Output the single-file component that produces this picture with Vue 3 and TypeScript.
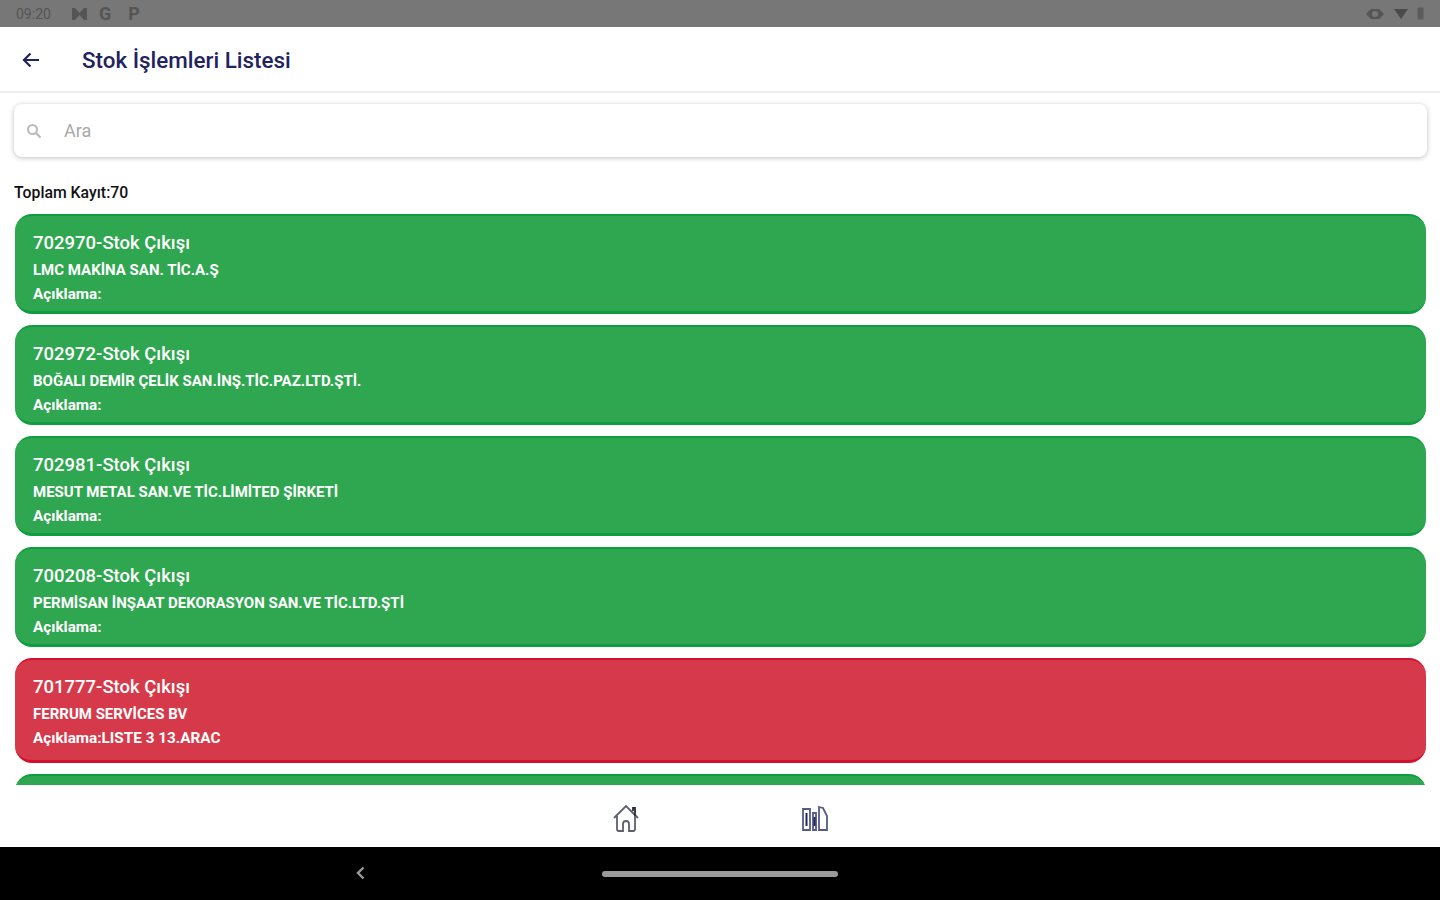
<script setup lang="ts">
interface StockRow {
  id: number
  company: string
  note: string
  failed?: boolean
}

const rows: StockRow[] = [
  { id: 702970, company: 'LMC MAKİNA SAN. TİC.A.Ş', note: '' },
  { id: 702972, company: 'BOĞALI DEMİR ÇELİK SAN.İNŞ.TİC.PAZ.LTD.ŞTİ.', note: '' },
  { id: 702981, company: 'MESUT METAL SAN.VE TİC.LİMİTED ŞİRKETİ', note: '' },
  { id: 700208, company: 'PERMİSAN İNŞAAT DEKORASYON SAN.VE TİC.LTD.ŞTİ', note: '' },
  { id: 701777, company: 'FERRUM SERVİCES BV', note: 'LISTE 3 13.ARAC', failed: true },
]
</script>

<template>
  <div class="page">
    <div class="status-bar">
      <div class="status-bar__left">
        <span class="status-bar__time">09:20</span>
        <svg class="status-bar__icon" width="17" height="14" viewBox="0 0 17 14">
          <path d="M1 1h3l4.500 5L13 1h3v12h-3L8.500 8 4 13H1z" fill="#555" />
        </svg>
        <span class="status-bar__letter">G</span>
        <span class="status-bar__letter status-bar__letter--p">P</span>
      </div>
      <div class="status-bar__right">
        <svg width="20" height="14" viewBox="0 0 20 14">
          <path d="M1 7l5-5h8l5 5-5 5H6z" fill="#555" />
          <circle cx="10" cy="7" r="3" fill="#777" />
        </svg>
        <svg width="14" height="12" viewBox="0 0 14 12">
          <path d="M0 1h14L7 11z" fill="#4a4a4a" />
        </svg>
        <svg width="7" height="13" viewBox="0 0 7 13">
          <rect x="0.500" y="0.500" width="6" height="12" rx="1" fill="#5c5c5c" />
        </svg>
      </div>
    </div>

    <header class="top-bar">
      <svg class="top-bar__back" width="20" height="18" viewBox="0 0 20 18">
        <path d="M18 9H3M9.500 2.500 3 9l6.500 6.500" fill="none" stroke="#1f2360" stroke-width="2.200" />
      </svg>
      <h1 class="top-bar__title">Stok İşlemleri Listesi</h1>
    </header>

    <main class="content">
      <div class="search">
        <svg width="16" height="16" viewBox="0 0 16 16">
          <circle cx="6.500" cy="6.500" r="4.500" fill="none" stroke="#b9b9b9" stroke-width="2" />
          <path d="M10 10l4.500 4.500" stroke="#b9b9b9" stroke-width="2.200" />
        </svg>
        <span class="search__placeholder">Ara</span>
      </div>

      <div class="total">Toplam Kayıt:70</div>

      <div class="list">
        <div
          v-for="row in rows"
          :key="row.id"
          class="stock-card"
          :class="{ 'stock-card--failed': row.failed }"
        >
          <div class="stock-card__title">{{ row.id }}-Stok Çıkışı</div>
          <div class="stock-card__company">{{ row.company }}</div>
          <div class="stock-card__note">Açıklama:{{ row.note }}</div>
        </div>
        <div class="stock-card"></div>
      </div>
    </main>

    <nav class="bottom-nav">
      <svg width="28" height="30" viewBox="0 0 28 30" fill="none" stroke="#5b5f70" stroke-width="1.800">
        <path d="M2 15 14 3l12 12" />
        <path d="M21 8V5h2v8" stroke="#2b2d3a" />
        <path d="M5 13v13a2 2 0 0 0 2 2h4v-7a3 3 0 0 1 6 0v7h4a2 2 0 0 0 2-2V13" />
      </svg>
      <svg width="28" height="28" viewBox="0 0 28 28" fill="none" stroke="#565a86" stroke-width="1.800">
        <path d="M2 5h7v21H2zM12 9h3v17h-3z" />
        <path d="M18 3l4 1 4 8v14h-8z" />
        <path d="M5.500 9v13M13.500 13v9" stroke="#23275f" stroke-width="2" />
      </svg>
    </nav>

    <div class="system-nav">
      <svg class="system-nav__back" width="12" height="16" viewBox="0 0 12 16">
        <path d="M9.500 2.500 4 8l5.500 5.500" fill="none" stroke="#9a9a9a" stroke-width="2.400" />
      </svg>
      <span class="system-nav__pill"></span>
    </div>
  </div>
</template>

<style>
html,
body {
  margin: 0;
  background: #fff;
}
</style>

<style scoped>
.page {
  display: flex;
  flex-direction: column;
  width: 1440px;
  height: 900px;
  overflow: hidden;
  background: #fff;
  font-family: Roboto, 'Liberation Sans', sans-serif;
}

.status-bar {
  flex: 0 0 27px;
  display: flex;
  justify-content: space-between;
  align-items: center;
  padding: 0 16px;
  box-sizing: border-box;
  background: #777;
  color: #555;
}

.status-bar__left,
.status-bar__right {
  display: flex;
  align-items: center;
}

.status-bar__right {
  gap: 9px;
}

.status-bar__time {
  width: 55px;
  font-size: 14px;
}

.status-bar__letter {
  margin-left: 11px;
  font-size: 18px;
  font-weight: 700;
  line-height: 1;
}

.status-bar__letter--p {
  margin-left: 17px;
}

.top-bar {
  flex: 0 0 66px;
  display: flex;
  align-items: center;
  box-sizing: border-box;
  padding: 2px 0 0 21px;
  border-bottom: 2px solid #eeeeee;
}

.top-bar__title {
  margin: 0 0 0 41px;
  color: #1f2360;
  font-size: 22.4px;
  font-weight: 500;
}

.content {
  flex: 1;
  min-height: 0;
  display: flex;
  flex-direction: column;
  padding: 11px 13px 0 14px;
}

.search {
  flex: 0 0 53px;
  display: flex;
  align-items: center;
  box-sizing: border-box;
  padding-left: 12px;
  border-radius: 8px;
  background: #fff;
  box-shadow: 0 1px 5px rgba(0, 0, 0, 0.25);
}

.search__placeholder {
  margin-left: 22px;
  color: #a8a8a8;
  font-size: 18px;
}

.total {
  margin: 27px 0 13px;
  color: #111;
  font-size: 15.8px;
  font-weight: 500;
  line-height: 17px;
}

.list {
  flex: 1;
  min-height: 0;
  overflow: hidden;
  display: flex;
  flex-direction: column;
  gap: 11px;
  padding: 0 1px;
}

.stock-card {
  flex: 0 0 auto;
  box-sizing: border-box;
  height: 100px;
  padding: 17px 18px 0;
  border-top: 2px solid #0f9d3f;
  border-bottom: 3px solid #0f9d3f;
  border-radius: 17px;
  background: #2fa650;
  color: #fff;
}

.stock-card--failed {
  height: 105px;
  border-color: #d20f2f;
  background: #d63a4a;
}

.stock-card__title {
  font-size: 18.5px;
  font-weight: 500;
  line-height: 21px;
}

.stock-card__company {
  margin-top: 8px;
  font-size: 15px;
  font-weight: 700;
  line-height: 17px;
}

.stock-card__note {
  margin-top: 7px;
  font-size: 15.3px;
  font-weight: 700;
  line-height: 17px;
}

.bottom-nav {
  flex: 0 0 62px;
  display: flex;
  justify-content: center;
  align-items: center;
  gap: 161px;
  padding-top: 3px;
  box-sizing: border-box;
}

.system-nav {
  flex: 0 0 53px;
  position: relative;
  display: flex;
  justify-content: center;
  align-items: center;
  background: #000;
}

.system-nav__back {
  position: absolute;
  left: 354px;
  top: 18px;
}

.system-nav__pill {
  width: 236px;
  height: 6px;
  border-radius: 3px;
  background: #9a9a9a;
}
</style>
